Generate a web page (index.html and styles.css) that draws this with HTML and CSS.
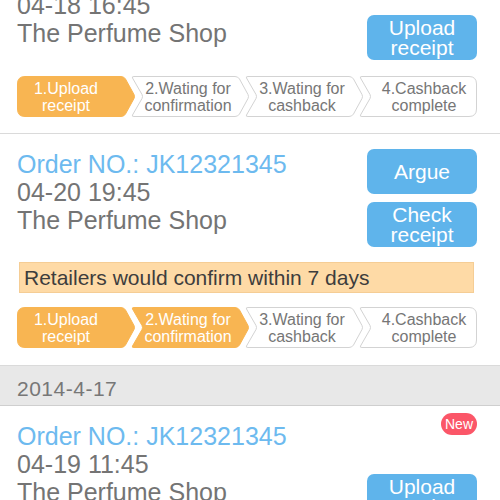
FILE: index.html
```html
<!DOCTYPE html>
<html>
<head>
<meta charset="utf-8">
<link rel="stylesheet" href="styles.css">
</head>
<body>
<div class="list">
  <div class="card card-first">
    <div class="head">
      <div class="info">
        <div class="order">Order NO.: JK12321340</div>
        <div class="line">04-18 16:45</div>
        <div class="line">The Perfume Shop</div>
      </div>
      <div class="actions">
        <div class="btn">Upload<br>receipt</div>
      </div>
    </div>
    <div class="steps">
      <div class="step step-first active">
        <svg class="shape" width="118" height="41" viewBox="0 0 118 41"><path d="M8,0.5 H104 Q107,0.5 108.5,3 L117,18.5 Q118,20.5 117,22.5 L108.5,38 Q107,40.5 104,40.5 H8 Q0.5,40.5 0.5,33 V8 Q0.5,0.5 8,0.5 Z"/></svg>
        <span class="label">1.Upload<br>receipt</span>
      </div>
      <div class="step step-mid">
        <svg class="shape" width="118" height="41" viewBox="0 0 118 41"><path d="M3,0.5 H104 Q107,0.5 108.5,3 L117,18.5 Q118,20.5 117,22.5 L108.5,38 Q107,40.5 104,40.5 H3 Q0.5,40.5 1.5,39 L11,22.5 Q12,20.5 11,18.5 L1.5,2 Q0.5,0.5 3,0.5 Z"/></svg>
        <span class="label">2.Wating for<br>confirmation</span>
      </div>
      <div class="step step-mid">
        <svg class="shape" width="118" height="41" viewBox="0 0 118 41"><path d="M3,0.5 H104 Q107,0.5 108.5,3 L117,18.5 Q118,20.5 117,22.5 L108.5,38 Q107,40.5 104,40.5 H3 Q0.5,40.5 1.5,39 L11,22.5 Q12,20.5 11,18.5 L1.5,2 Q0.5,0.5 3,0.5 Z"/></svg>
        <span class="label">3.Wating for<br>cashback</span>
      </div>
      <div class="step step-last">
        <svg class="shape" width="118" height="41" viewBox="0 0 118 41"><path d="M3,0.5 H110 Q117.5,0.5 117.5,8 V33 Q117.5,40.5 110,40.5 H3 Q0.5,40.5 1.5,39 L11,22.5 Q12,20.5 11,18.5 L1.5,2 Q0.5,0.5 3,0.5 Z"/></svg>
        <span class="label">4.Cashback<br>complete</span>
      </div>
    </div>
  </div>

  <div class="card">
    <div class="head">
      <div class="info">
        <div class="order">Order NO.: JK12321345</div>
        <div class="line">04-20 19:45</div>
        <div class="line">The Perfume Shop</div>
      </div>
      <div class="actions">
        <div class="btn btn-single">Argue</div>
        <div class="btn">Check<br>receipt</div>
      </div>
    </div>
    <div class="notice">Retailers would confirm within 7 days</div>
    <div class="steps steps-tight">
      <div class="step step-first active">
        <svg class="shape" width="118" height="41" viewBox="0 0 118 41"><path d="M8,0.5 H104 Q107,0.5 108.5,3 L117,18.5 Q118,20.5 117,22.5 L108.5,38 Q107,40.5 104,40.5 H8 Q0.5,40.5 0.5,33 V8 Q0.5,0.5 8,0.5 Z"/></svg>
        <span class="label">1.Upload<br>receipt</span>
      </div>
      <div class="step step-mid active">
        <svg class="shape" width="118" height="41" viewBox="0 0 118 41"><path d="M3,0.5 H104 Q107,0.5 108.5,3 L117,18.5 Q118,20.5 117,22.5 L108.5,38 Q107,40.5 104,40.5 H3 Q0.5,40.5 1.5,39 L11,22.5 Q12,20.5 11,18.5 L1.5,2 Q0.5,0.5 3,0.5 Z"/></svg>
        <span class="label">2.Wating for<br>confirmation</span>
      </div>
      <div class="step step-mid">
        <svg class="shape" width="118" height="41" viewBox="0 0 118 41"><path d="M3,0.5 H104 Q107,0.5 108.5,3 L117,18.5 Q118,20.5 117,22.5 L108.5,38 Q107,40.5 104,40.5 H3 Q0.5,40.5 1.5,39 L11,22.5 Q12,20.5 11,18.5 L1.5,2 Q0.5,0.5 3,0.5 Z"/></svg>
        <span class="label">3.Wating for<br>cashback</span>
      </div>
      <div class="step step-last">
        <svg class="shape" width="118" height="41" viewBox="0 0 118 41"><path d="M3,0.5 H110 Q117.5,0.5 117.5,8 V33 Q117.5,40.5 110,40.5 H3 Q0.5,40.5 1.5,39 L11,22.5 Q12,20.5 11,18.5 L1.5,2 Q0.5,0.5 3,0.5 Z"/></svg>
        <span class="label">4.Cashback<br>complete</span>
      </div>
    </div>
  </div>

  <div class="date-bar">2014-4-17</div>

  <div class="card card-new">
    <span class="badge">New</span>
    <div class="head">
      <div class="info">
        <div class="order">Order NO.: JK12321345</div>
        <div class="line">04-19 11:45</div>
        <div class="line">The Perfume Shop</div>
      </div>
      <div class="actions">
        <div class="btn">Upload<br>receipt</div>
      </div>
    </div>
  </div>
</div>
</body>
</html>
```

FILE: styles.css
```css
* { box-sizing: border-box; }

html, body {
  margin: 0;
  padding: 0;
  background: #ffffff;
  overflow: hidden;
}

body {
  width: 500px;
  height: 500px;
  font-family: "Liberation Sans", Arial, sans-serif;
  color: #747474;
}

.list {
  display: flex;
  flex-direction: column;
}

.card {
  position: relative;
  padding: 15px 23px 17px 17px;
  border-bottom: 1px solid #dadada;
  background: #fff;
}

.card-first {
  margin-top: -53px;
  padding-top: 16px;
  padding-bottom: 16px;
}

.head {
  display: flex;
  justify-content: space-between;
  align-items: flex-end;
}

.info {
  padding-bottom: 13px;
  font-size: 25px;
  line-height: 28px;
}

.order {
  color: #6dbaef;
}

.line {
  color: #747474;
}

.actions {
  display: flex;
  flex-direction: column;
  gap: 8px;
}

.btn {
  width: 110px;
  height: 45px;
  border-radius: 7px;
  background: #5fb4eb;
  color: #fff;
  font-size: 21px;
  line-height: 20px;
  text-align: center;
  display: flex;
  align-items: center;
  justify-content: center;
}

.btn-single {
  line-height: 24px;
}

.notice {
  margin-top: 15px;
  margin-left: 2px;
  margin-right: 3px;
  height: 31px;
  background: #fedaa6;
  border: 1px solid #f5cd95;
  color: #3d3d3d;
  font-size: 21px;
  line-height: 29px;
  padding-left: 4px;
}

.steps {
  display: flex;
  margin-top: 16px;
  height: 41px;
}

.steps-tight {
  margin-top: 14px;
}

.step {
  position: relative;
  flex: 0 0 118px;
  height: 41px;
  display: flex;
  align-items: center;
  justify-content: center;
  font-size: 16px;
  line-height: 17px;
  color: #767676;
  text-align: center;
}

.step + .step {
  margin-left: -4px;
}

.step .shape {
  position: absolute;
  left: 0;
  top: 0;
}

.step .shape path {
  fill: #ffffff;
  stroke: #d3d3d3;
  stroke-width: 1;
}

.step.active .shape path {
  fill: #f8b552;
  stroke: #f8b552;
}

.step.active {
  color: #ffffff;
}

.label {
  position: relative;
}

.step-first .label {
  padding-right: 20px;
}

.step-mid .label {
  padding-left: 2px;
  padding-right: 6px;
}

.step-last .label {
  padding-left: 12px;
}

.date-bar {
  background: #e8e8e8;
  border-bottom: 1px solid #cfcfcf;
  height: 40px;
  padding: 11px 17px 0;
  font-size: 21px;
  line-height: 24px;
  letter-spacing: 0.5px;
  color: #777777;
}

.card-new {
  padding-top: 16px;
}

.badge {
  position: absolute;
  top: 7px;
  right: 23px;
  width: 36px;
  height: 22px;
  border-radius: 11px;
  background: #fb5668;
  color: #fff;
  font-size: 14px;
  line-height: 22px;
  text-align: center;
}
```
